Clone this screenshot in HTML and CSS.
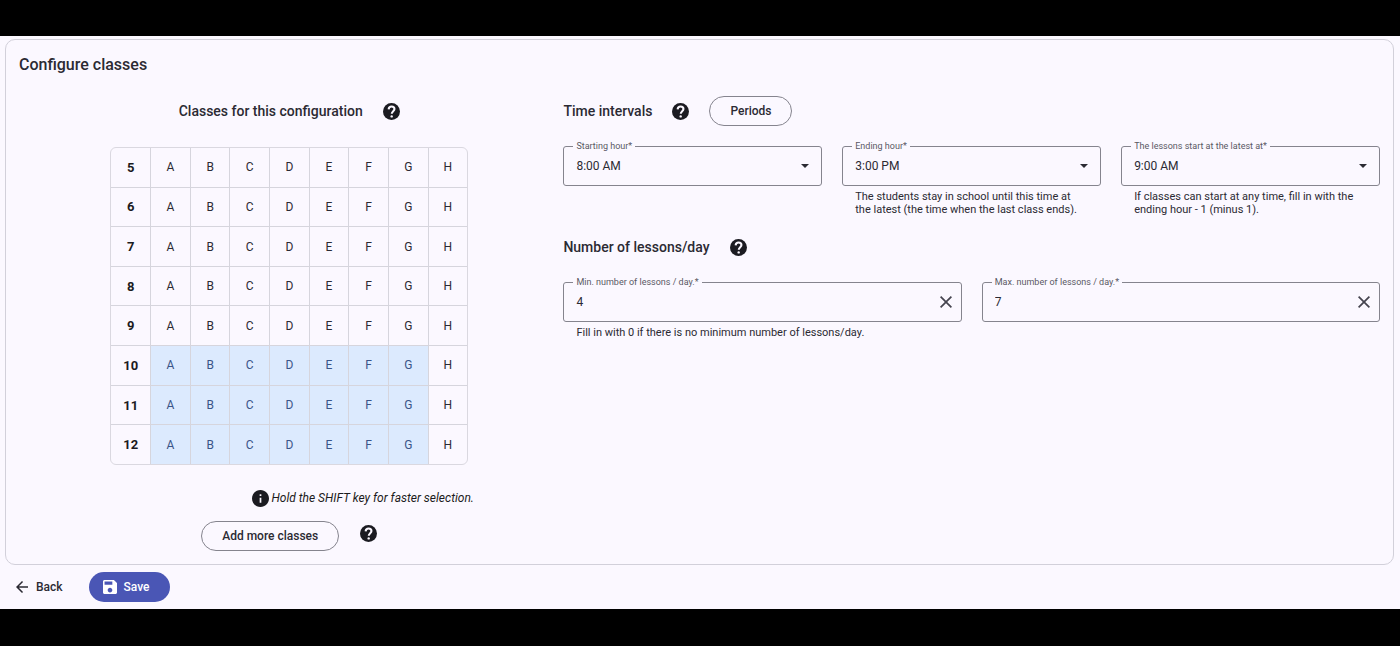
FILE: index.html
```
<!DOCTYPE html>
<html lang="en">
  <head>
    <meta charset="UTF-8" />
    <meta name="viewport" content="width=device-width, initial-scale=1.0" />
    <title>Configure classes</title>
    <link rel="stylesheet" href="styles.css" />
  </head>
  <body>
    <svg class="sprite" aria-hidden="true">
      <symbol id="icon-help" viewBox="2 2 20 20">
        <circle cx="12" cy="12" r="10" />
        <path class="mark" d="M8.6 9.4c.2-2 1.6-3.2 3.5-3.2 2 0 3.4 1.200 3.400 3 0 2.400-3.200 2.700-3.200 5.500" />
        <circle class="dot" cx="12.200" cy="17.800" r="1.400" />
      </symbol>
      <symbol id="icon-info" viewBox="2 2 20 20">
        <path d="M12 2C6.48 2 2 6.48 2 12s4.48 10 10 10 10-4.48 10-10S17.52 2 12 2zm1 15h-2v-6h2v6zm0-8h-2V7h2v2z" />
      </symbol>
      <symbol id="icon-close" viewBox="5 5 14 14">
        <path d="M19 6.41L17.59 5 12 10.59 6.41 5 5 6.41 10.59 12 5 17.59 6.41 19 12 13.41 17.59 19 19 17.59 13.41 12z" />
      </symbol>
      <symbol id="icon-back" viewBox="4 4 16 16">
        <path d="M20 11H7.83l5.59-5.59L12 4l-8 8 8 8 1.41-1.41L7.83 13H20v-2z" />
      </symbol>
      <symbol id="icon-save" viewBox="3 3 18 18">
        <path d="M17 3H5c-1.11 0-2 .9-2 2v14c0 1.1.89 2 2 2h14c1.1 0 2-.9 2-2V7l-4-4zm-5 16c-1.66 0-3-1.34-3-3s1.34-3 3-3 3 1.34 3 3-1.34 3-3 3zm3-10H5V5h10v4z" />
      </symbol>
      <symbol id="icon-arrow" viewBox="0 0 10 5">
        <path d="M0 0l5 5 5-5z" />
      </symbol>
    </svg>

    <main class="page">
      <section class="card">
        <h1 class="card-title">Configure classes</h1>
        <div class="columns">
          <div class="classes">
            <div class="heading">
              <h2>Classes for this configuration</h2>
              <button class="icon-btn" aria-label="Help: classes">
                <svg><use href="#icon-help" /></svg>
              </button>
            </div>
            <table class="class-table">
              <tbody id="class-rows"></tbody>
            </table>
            <p class="tip">
              <svg><use href="#icon-info" /></svg>
              <em>Hold the SHIFT key for faster selection.</em>
            </p>
            <div class="add-row">
              <button class="btn btn-outline">Add more classes</button>
              <button class="icon-btn" aria-label="Help: add classes">
                <svg><use href="#icon-help" /></svg>
              </button>
            </div>
          </div>

          <form class="settings">
            <div class="heading">
              <h2>Time intervals</h2>
              <button type="button" class="icon-btn" aria-label="Help: time intervals">
                <svg><use href="#icon-help" /></svg>
              </button>
              <button type="button" class="btn btn-outline">Periods</button>
            </div>
            <div class="fields fields-3">
              <div class="field">
                <label for="start">Starting hour*</label>
                <div class="field-box">
                  <select id="start">
                    <option>7:00 AM</option>
                    <option selected>8:00 AM</option>
                    <option>9:00 AM</option>
                  </select>
                  <svg class="arrow"><use href="#icon-arrow" /></svg>
                </div>
              </div>
              <div class="field">
                <label for="end">Ending hour*</label>
                <div class="field-box">
                  <select id="end">
                    <option>2:00 PM</option>
                    <option selected>3:00 PM</option>
                    <option>4:00 PM</option>
                  </select>
                  <svg class="arrow"><use href="#icon-arrow" /></svg>
                </div>
                <p class="hint">
                  The students stay in school until this time at the latest (the
                  time when the last class ends).
                </p>
              </div>
              <div class="field">
                <label for="latest">The lessons start at the latest at*</label>
                <div class="field-box">
                  <select id="latest">
                    <option>8:00 AM</option>
                    <option selected>9:00 AM</option>
                    <option>10:00 AM</option>
                  </select>
                  <svg class="arrow"><use href="#icon-arrow" /></svg>
                </div>
                <p class="hint">
                  If classes can start at any time, fill in with the ending hour
                  - 1 (minus 1).
                </p>
              </div>
            </div>

            <div class="heading">
              <h2>Number of lessons/day</h2>
              <button type="button" class="icon-btn" aria-label="Help: number of lessons">
                <svg><use href="#icon-help" /></svg>
              </button>
            </div>
            <div class="fields fields-2">
              <div class="field">
                <label for="min">Min. number of lessons / day.*</label>
                <div class="field-box">
                  <input id="min" type="text" inputmode="numeric" value="4" />
                  <button type="button" class="clear" aria-label="Clear minimum">
                    <svg><use href="#icon-close" /></svg>
                  </button>
                </div>
                <p class="hint">
                  Fill in with 0 if there is no minimum number of lessons/day.
                </p>
              </div>
              <div class="field">
                <label for="max">Max. number of lessons / day.*</label>
                <div class="field-box">
                  <input id="max" type="text" inputmode="numeric" value="7" />
                  <button type="button" class="clear" aria-label="Clear maximum">
                    <svg><use href="#icon-close" /></svg>
                  </button>
                </div>
              </div>
            </div>
          </form>
        </div>
      </section>

      <footer class="actions">
        <button class="btn btn-text">
          <svg><use href="#icon-back" /></svg>
          Back
        </button>
        <button class="btn btn-primary">
          <svg><use href="#icon-save" /></svg>
          Save
        </button>
      </footer>
    </main>

    <script>
      const rows = document.getElementById("class-rows");
      for (let grade = 5; grade <= 12; grade++) {
        const tr = document.createElement("tr");
        tr.innerHTML = `<th scope="row">${grade}</th>`;
        for (const letter of "ABCDEFGH") {
          const on = grade >= 10 && letter != "H";
          tr.innerHTML += `<td><button class="cell" aria-pressed="${on}">${letter}</button></td>`;
        }
        rows.append(tr);
      }

      rows.addEventListener("click", (e) => {
        const cell = e.target.closest(".cell");
        if (!cell) return;
        cell.setAttribute("aria-pressed", cell.getAttribute("aria-pressed") != "true");
      });

      document.querySelectorAll(".clear").forEach((b) => {
        b.addEventListener("click", () => {
          b.previousElementSibling.value = "";
        });
      });
    </script>
  </body>
</html>
```
FILE: styles.css
```
* {
  box-sizing: border-box;
}

body {
  margin: 0;
  padding: 36px 0;
  background: #000;
  color: #2b2a33;
  font-family: Roboto, Arial, sans-serif;
  font-size: 12px;
}

h1,
h2,
p {
  margin: 0;
}

button,
input,
select {
  margin: 0;
  padding: 0;
  border: 0;
  background: none;
  color: inherit;
  font: inherit;
}

button {
  cursor: pointer;
}

svg {
  display: block;
  flex: none;
  fill: currentColor;
}

.sprite {
  position: absolute;
  width: 0;
  height: 0;
}

.mark {
  fill: none;
  stroke: #fbf8ff;
  stroke-width: 2.4;
}

.dot {
  fill: #fbf8ff;
}

.page {
  padding: 3px 6px 7px 5px;
  background: #fbf8ff;
}

.card {
  padding: 13px;
  border: 1px solid #d2d0da;
  border-radius: 10px;
}

.card-title {
  font-size: 16px;
  font-weight: 500;
  line-height: 24px;
}

.columns {
  display: grid;
  grid-template-columns: 2fr 3fr;
  margin-top: 19px;
}

.classes {
  display: flex;
  flex-direction: column;
  align-items: center;
  padding-right: 4px;
}

.heading {
  display: flex;
  align-items: center;
  gap: 20px;
  height: 30px;
}

.heading h2 {
  font-size: 14px;
  font-weight: 500;
}

.icon-btn {
  color: #1b1b21;
}

.icon-btn svg,
.tip svg {
  width: 17px;
  height: 17px;
}

.btn {
  display: flex;
  align-items: center;
  height: 30px;
  padding: 0 20px;
  border-radius: 15px;
  font-size: 12px;
  font-weight: 500;
}

.btn-outline {
  border: 1px solid #85848e;
}

/* grade / letter table */
.class-table {
  width: 358px;
  height: 318px;
  margin-top: 21px;
  border: 1px solid #dad8e0;
  border-radius: 6px;
  border-spacing: 0;
  table-layout: fixed;
  overflow: hidden;
}

.class-table th,
.class-table td {
  padding: 0;
  text-align: center;
}

.class-table th {
  width: 39px;
  font-size: 13px;
  font-weight: 700;
  color: #1b1b21;
}

.class-table td {
  border-left: 1px solid #d6d5dd;
}

.class-table tr + tr > * {
  border-top: 1px solid #d6d5dd;
}

.class-table td:has([aria-pressed="true"]) {
  background: #dceafe;
  color: #3a5488;
}

.cell {
  display: block;
  width: 100%;
  height: 38px;
}

.tip {
  display: flex;
  align-items: center;
  gap: 2px;
  margin-top: 24px;
  padding-left: 148px;
  color: #1b1b21;
  line-height: 18px;
}

.add-row {
  display: flex;
  align-items: flex-start;
  gap: 21px;
  margin-top: 14px;
}

.add-row .icon-btn {
  height: 24px;
}

/* form */
.fields {
  display: grid;
  gap: 20px;
  margin-top: 20px;
}

.fields-3 {
  grid-template-columns: repeat(3, 1fr);
  margin-bottom: 16px;
}

.fields-2 {
  grid-template-columns: repeat(2, 1fr);
}

.field {
  position: relative;
}

.field label {
  position: absolute;
  top: -7px;
  left: 10px;
  padding: 0 3px;
  background: #fbf8ff;
  color: #5a5964;
  font-size: 9px;
  line-height: 14px;
}

.field-box {
  display: flex;
  align-items: center;
  height: 40px;
  padding: 0 9px 0 12px;
  border: 1px solid #85848e;
  border-radius: 3px;
}

.field-box select,
.field-box input {
  flex: 1;
  min-width: 0;
  height: 100%;
  outline: none;
  appearance: none;
}

.arrow {
  width: 8px;
  height: 4px;
  margin-right: 3px;
  pointer-events: none;
}

.clear {
  color: #45444f;
}

.clear svg {
  width: 12px;
  height: 12px;
}

.hint {
  padding: 4px 13px 0;
  font-size: 11px;
  line-height: 13px;
}

.actions {
  display: flex;
  gap: 26px;
  margin-top: 7px;
  padding-left: 11px;
}

.btn-text {
  gap: 8px;
  padding: 0;
}

.btn-text svg {
  width: 12px;
  height: 12px;
}

.btn-primary {
  gap: 7px;
  padding: 0 20px 0 14px;
  background: #4a56b5;
  color: #fff;
}

.btn-primary svg {
  width: 14px;
  height: 14px;
}
```
